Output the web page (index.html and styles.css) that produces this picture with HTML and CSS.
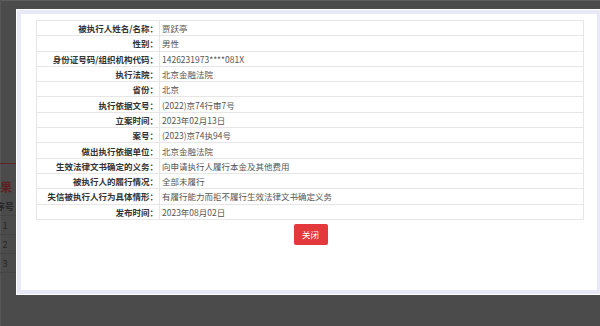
FILE: index.html
```html
<!DOCTYPE html>
<html lang="zh-CN">
<head>
<meta charset="utf-8">
<title>失信被执行人详情</title>
<link rel="stylesheet" href="styles.css">
</head>
<body>
<div class="page">
  <div class="topline"></div>
  <div class="content">
    <div class="result-head"><span>查询结果</span></div>
    <table class="bg-table">
      <tr><th>序号</th></tr>
      <tr><td>1</td></tr>
      <tr><td>2</td></tr>
      <tr><td>3</td></tr>
    </table>
  </div>
</div>
<div class="overlay">
  <div class="dialog">
    <div class="dialog-inner">
      <table class="detail">
        <tr><th>被执行人姓名/名称：</th><td>贾跃亭</td></tr>
        <tr><th>性别：</th><td>男性</td></tr>
        <tr><th>身份证号码/组织机构代码：</th><td>1426231973****081X</td></tr>
        <tr><th>执行法院：</th><td>北京金融法院</td></tr>
        <tr><th>省份：</th><td>北京</td></tr>
        <tr><th>执行依据文号：</th><td>(2022)京74行审7号</td></tr>
        <tr><th>立案时间：</th><td>2023年02月13日</td></tr>
        <tr><th>案号：</th><td>(2023)京74执94号</td></tr>
        <tr><th>做出执行依据单位：</th><td>北京金融法院</td></tr>
        <tr><th>生效法律文书确定的义务：</th><td>向申请执行人履行本金及其他费用</td></tr>
        <tr><th>被执行人的履行情况：</th><td>全部未履行</td></tr>
        <tr><th>失信被执行人行为具体情形：</th><td>有履行能力而拒不履行生效法律文书确定义务</td></tr>
        <tr><th>发布时间：</th><td>2023年08月02日</td></tr>
      </table>
      <div class="actions"><button class="btn-close" type="button">关闭</button></div>
    </div>
  </div>
</div>
</body>
</html>
```

FILE: styles.css
```css
html, body {
  margin: 0;
  padding: 0;
}
body {
  width: 600px;
  height: 326px;
  overflow: hidden;
  background: #4b4b4b;
  font-family: "Microsoft YaHei", "Noto Sans CJK SC", sans-serif;
  position: relative;
}
.page {
  height: 326px;
  border-left: 1px solid #565656;
  box-sizing: border-box;
}
.topline {
  height: 1px;
  background: #5e5e5e;
}
.content {
  padding-top: 162px;
  margin-left: -17px;
}
.result-head {
  border-top: 1px solid #642222;
  height: 34px;
  box-sizing: border-box;
  padding-top: 9px;
  margin-left: -20px;
}
.result-head span {
  font-size: 12px;
  font-weight: bold;
  color: #5c2222;
  line-height: 14px;
}
.bg-table {
  border-collapse: collapse;
  color: #262626;
  font-size: 9px;
}
.bg-table th,
.bg-table td {
  width: 42px;
  padding: 0;
  text-align: center;
  border-bottom: 1px solid #444;
  height: 18px;
}
.bg-table th {
  font-weight: bold;
}
.overlay {
  position: absolute;
  left: 16px;
  top: 9px;
}
.dialog {
  width: 586px;
  background: #fff;
  padding: 1px;
  box-sizing: border-box;
}
.dialog-inner {
  border: 4px solid #e8e8f6;
  background: #fff;
  height: 284px;
  padding: 6px 0 0 15px;
  box-sizing: border-box;
}
.detail {
  border-collapse: collapse;
  width: 548px;
  font-size: 8.5px;
  table-layout: fixed;
}
.detail th,
.detail td {
  border: 1px solid #e6e6e6;
  height: 14.3px;
  line-height: 14px;
  padding: 0;
  white-space: nowrap;
}
.detail th {
  width: 121px;
  text-align: right;
  font-weight: bold;
  color: #333;
  padding-right: 1px;
}
.detail td {
  text-align: left;
  color: #555;
  padding-left: 2px;
}
.actions {
  width: 548px;
  display: flex;
  justify-content: center;
  padding-top: 4px;
}
.btn-close {
  width: 34px;
  height: 21px;
  border: none;
  border-radius: 2px;
  background: #e4393c;
  color: #fff;
  font-family: inherit;
  font-size: 8.5px;
  padding: 0;
  margin-left: 1px;
}
```
